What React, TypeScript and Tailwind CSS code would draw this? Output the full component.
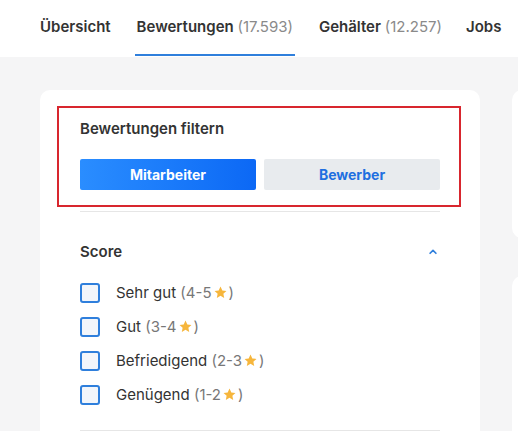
import React from "react";

const Star = () => (
  <svg viewBox="0 0 24 24" className="inline-block w-[15px] h-[15px] mx-[1px] -mt-[3px]" fill="#f6b63c">
    <path d="M12 2.5l2.9 6.1 6.6.8-4.9 4.6 1.3 6.6L12 17.3l-5.9 3.3 1.3-6.6-4.9-4.6 6.6-.8z" />
  </svg>
);

const items = [
  { label: "Sehr gut", range: "4-5" },
  { label: "Gut", range: "3-4" },
  { label: "Befriedigend", range: "2-3" },
  { label: "Genügend", range: "1-2" },
];

export default function App() {
  return (
    <div className="w-[518px] h-[431px] overflow-hidden bg-[#f5f5f6] text-[#333] font-['Inter','Liberation_Sans',sans-serif]">
      <div className="h-[57px] bg-white flex items-stretch pl-[40px] gap-[24px] text-[15px] font-semibold whitespace-nowrap">
        <div className="flex items-center pb-[3px] text-[#333]">Übersicht</div>
        <div className="relative flex items-center pb-[3px] text-[#333] px-[2px]">
          <span>
            Bewertungen <span className="font-normal text-[#8a8a8a]">(17.593)</span>
          </span>
          <div className="absolute left-0 right-0 bottom-[1px] h-[2px] bg-[#2f7fdc]" />
        </div>
        <div className="flex items-center pb-[3px] text-[#333]">
          <span>
            Gehälter <span className="font-normal text-[#8a8a8a]">(12.257)</span>
          </span>
        </div>
        <div className="flex items-center pb-[3px] text-[#333]">Jobs</div>
      </div>

      <div className="flex gap-[32px] pl-[40px] pt-[33px]">
        <div className="relative w-[440px] shrink-0 h-[400px] bg-white rounded-[10px] px-[40px] pt-[29px]">
          <div className="absolute left-[17px] top-[16px] w-[404px] h-[101px] border-2 border-[#d8262e]" />
          <div className="text-[15px] font-semibold leading-[20px] text-[#333]">Bewertungen filtern</div>
          <div className="flex gap-[8px] mt-[20px]">
            <div className="flex-1 h-[31px] rounded-[2px] bg-gradient-to-r from-[#2a8dff] to-[#0c68f5] text-white text-[14px] font-bold flex items-center justify-center">
              Mitarbeiter
            </div>
            <div className="flex-1 h-[31px] rounded-[2px] bg-[#e8ebee] text-[#1f6fe0] text-[14px] font-bold flex items-center justify-center">
              Bewerber
            </div>
          </div>
          <div className="mt-[21px] h-px bg-[#e6e6e6]" />
          <div className="flex items-center justify-between mt-[30px] h-[20px]">
            <div className="text-[15px] font-semibold text-[#333]">Score</div>
            <svg viewBox="0 0 12 12" className="w-[10px] h-[10px] mr-[2px]" fill="none" stroke="#2f7fdc" strokeWidth="2" strokeLinecap="round" strokeLinejoin="round">
              <path d="M2.5 7.5L6 4l3.5 3.5" />
            </svg>
          </div>
          <div className="flex flex-col gap-[14px] mt-[21px]">
            {items.map((it) => (
              <div key={it.label} className="flex items-center h-[20px]">
                <div className="w-[20px] h-[20px] rounded-[3px] border-2 border-[#2f7fdc] bg-[#f3f6fb] shrink-0" />
                <div className="ml-[16px] text-[15px] text-[#333] whitespace-nowrap">
                  {it.label}{" "}
                  <span className="text-[#777]">
                    ({it.range}
                    <Star />)
                  </span>
                </div>
              </div>
            ))}
          </div>
          <div className="mt-[25px] h-px bg-[#e6e6e6]" />
        </div>
        <div className="flex flex-col gap-[38px] shrink-0">
          <div className="w-[200px] h-[148px] bg-white rounded-[10px]" />
          <div className="w-[200px] h-[300px] bg-white rounded-[10px]" />
        </div>
      </div>
    </div>
  );
}
